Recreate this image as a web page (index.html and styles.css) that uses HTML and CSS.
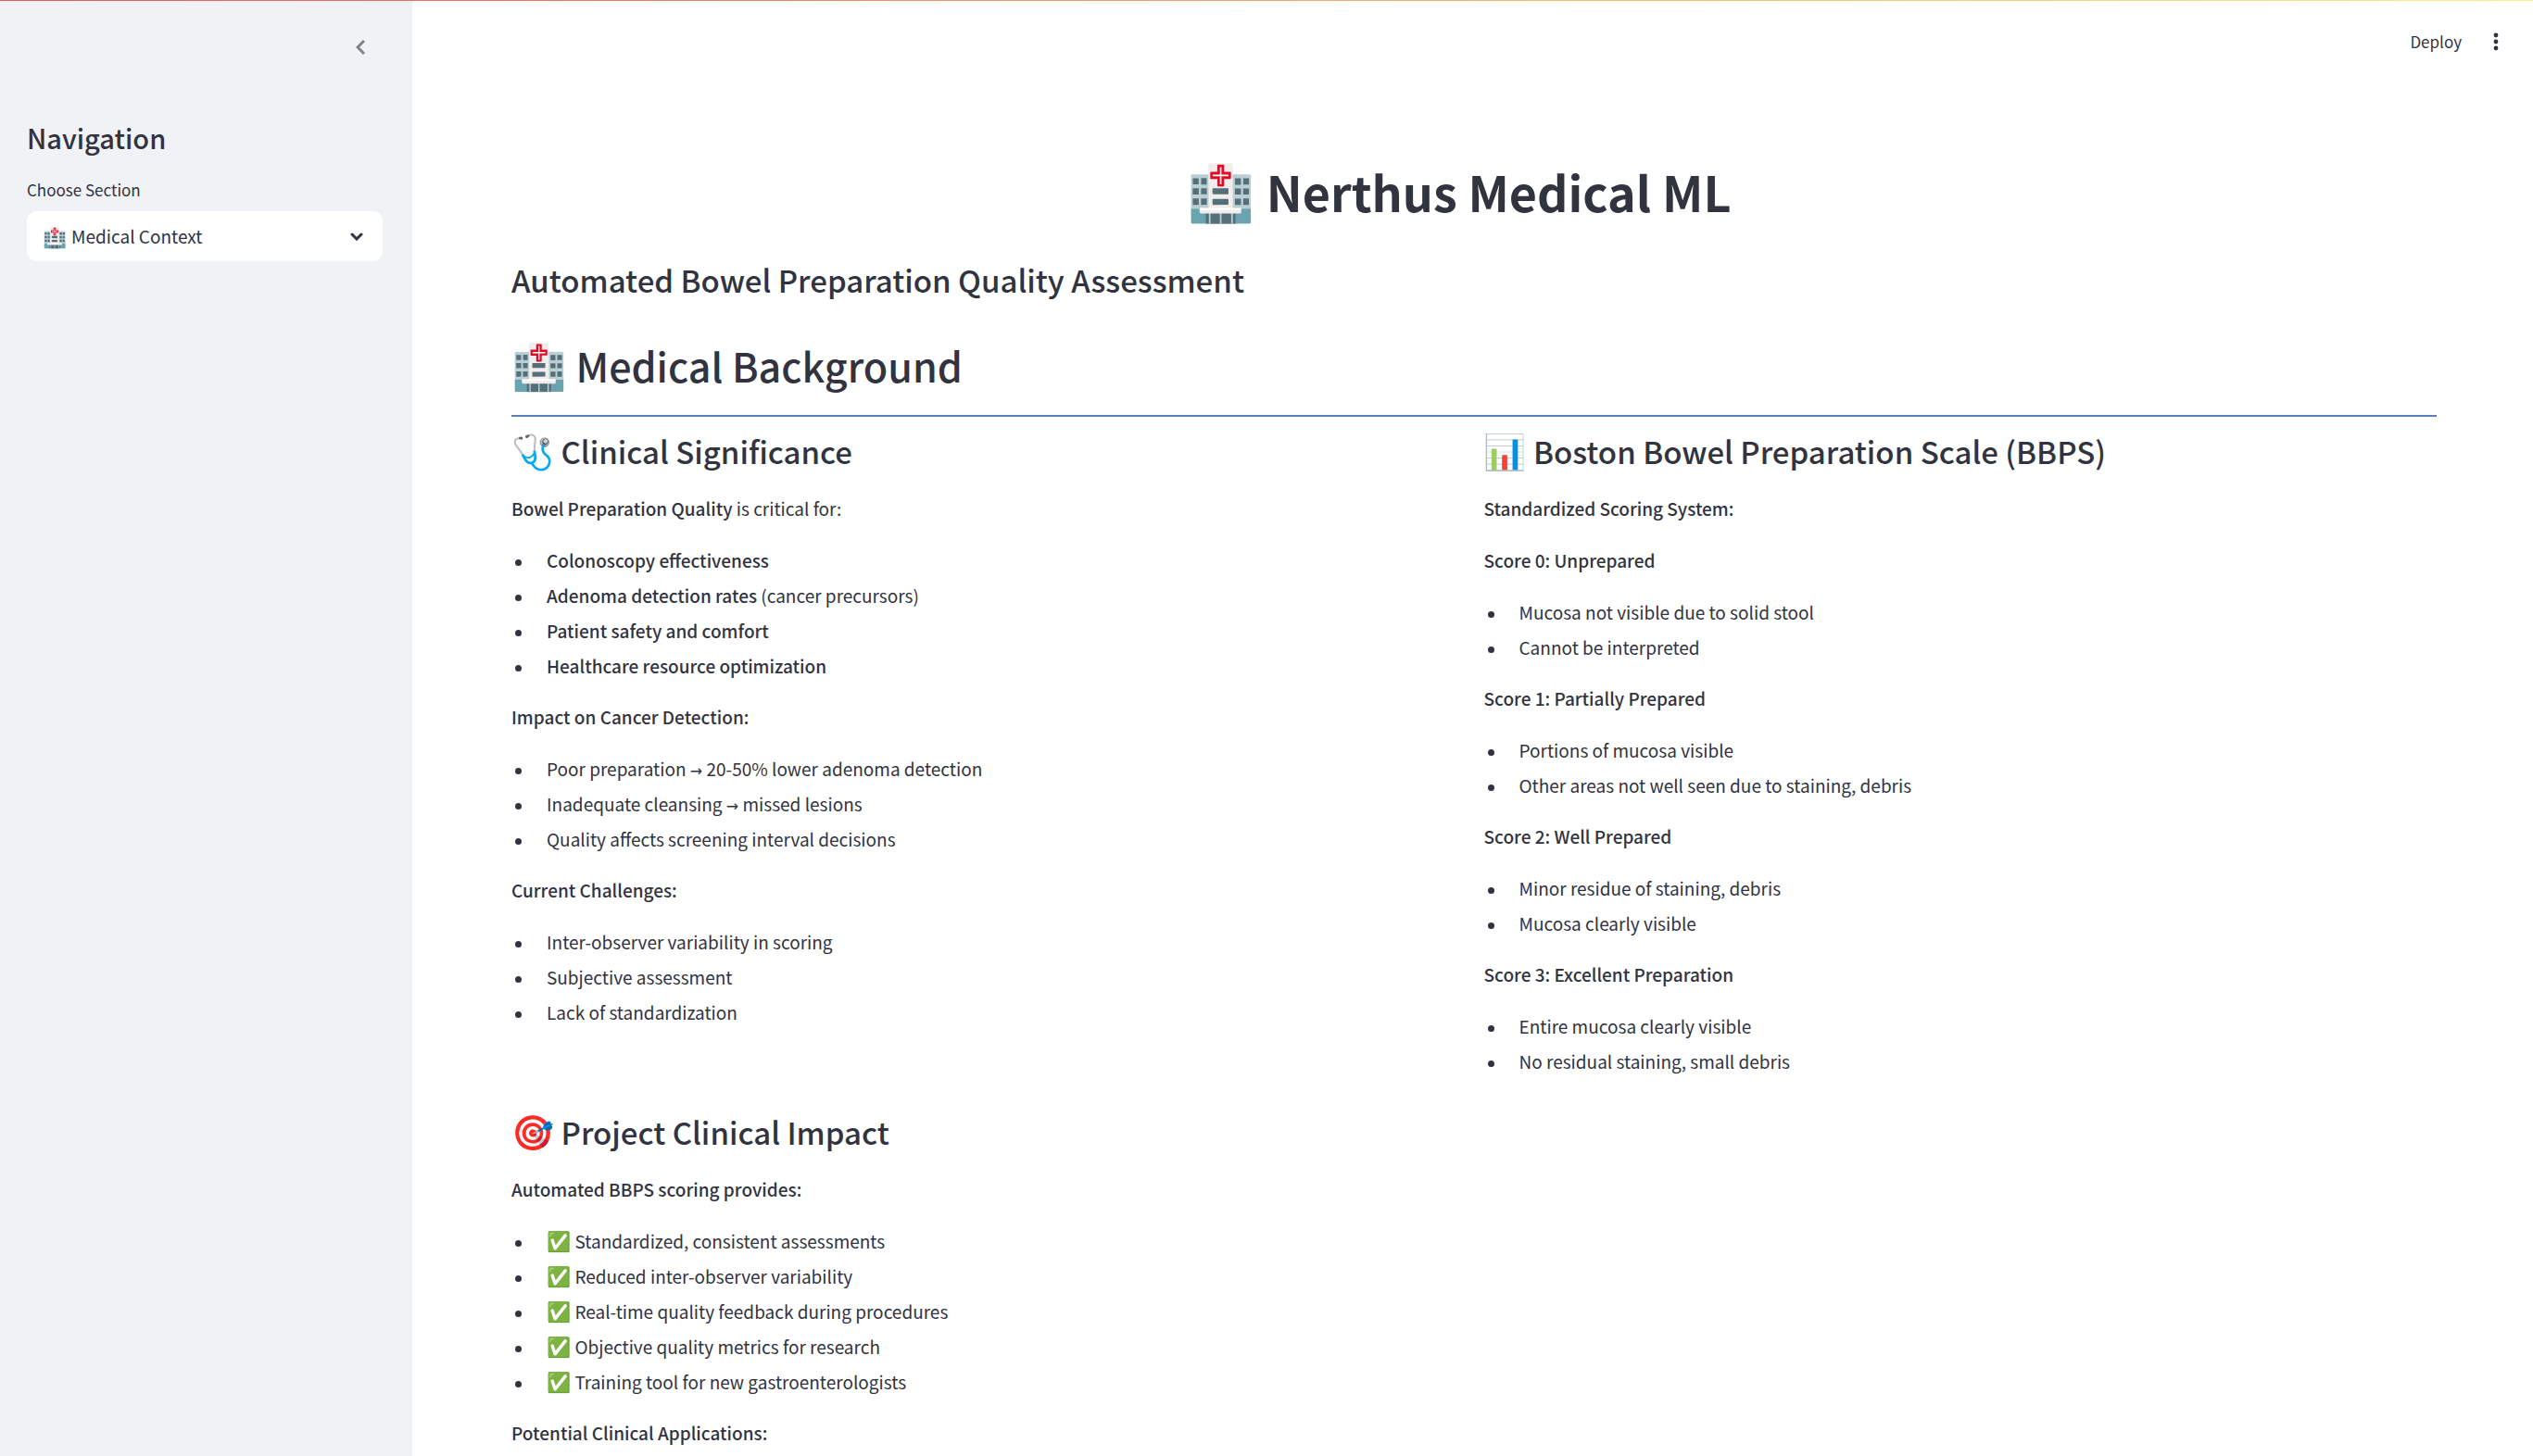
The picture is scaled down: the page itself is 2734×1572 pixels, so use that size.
FILE: index.html
```html
<!DOCTYPE html>
<html lang="en">
<head>
<meta charset="utf-8">
<title>Nerthus Medical ML</title>
<link rel="stylesheet" href="styles.css">
</head>
<body>
<div class="app">
  <aside class="sidebar">
    <div class="sidebar-header">
      <button class="icon-button collapse" type="button" aria-label="Collapse sidebar">
        <svg width="10" height="16" viewBox="0 0 10 16" fill="none" stroke="currentColor" stroke-width="3"><path d="M9 1 2 8l7 7"/></svg>
      </button>
    </div>
    <h2 class="sidebar-title">Navigation</h2>
    <label class="field-label" for="section">Choose Section</label>
    <div class="select-wrap">
      <select class="select" id="section">
        <option>Medical Context</option>
      </select>
      <span class="select-icon emoji">🏥</span>
      <svg class="select-arrow" width="14" height="9" viewBox="0 0 14 9" fill="none" stroke="currentColor" stroke-width="3" stroke-linecap="round"><path d="M2 2l5 5 5-5"/></svg>
    </div>
  </aside>
  <div class="page">
    <header class="toolbar">
      <button class="deploy" type="button">Deploy</button>
      <button class="icon-button" type="button" aria-label="Main menu">
        <svg width="6" height="20" viewBox="0 0 6 20" fill="currentColor"><circle cx="3" cy="3" r="2.4"/><circle cx="3" cy="10" r="2.4"/><circle cx="3" cy="17" r="2.4"/></svg>
      </button>
    </header>
    <main class="content">
      <h1 class="title"><span class="emoji">🏥</span> Nerthus Medical ML</h1>
      <h3 class="subtitle">Automated Bowel Preparation Quality Assessment</h3>
      <h2 class="section-title"><span class="emoji">🏥</span> Medical Background</h2>
      <div class="columns">
        <section class="column">
          <h3><span class="emoji">🩺</span> Clinical Significance</h3>
          <p><strong>Bowel Preparation Quality</strong> is critical for:</p>
          <ul>
            <li><strong>Colonoscopy effectiveness</strong></li>
            <li><strong>Adenoma detection rates</strong> (cancer precursors)</li>
            <li><strong>Patient safety and comfort</strong></li>
            <li><strong>Healthcare resource optimization</strong></li>
          </ul>
          <p><strong>Impact on Cancer Detection:</strong></p>
          <ul>
            <li>Poor preparation <span class="arrow">→</span> 20-50% lower adenoma detection</li>
            <li>Inadequate cleansing <span class="arrow">→</span> missed lesions</li>
            <li>Quality affects screening interval decisions</li>
          </ul>
          <p><strong>Current Challenges:</strong></p>
          <ul>
            <li>Inter-observer variability in scoring</li>
            <li>Subjective assessment</li>
            <li>Lack of standardization</li>
          </ul>
        </section>
        <section class="column">
          <h3><span class="emoji">📊</span> Boston Bowel Preparation Scale (BBPS)</h3>
          <p><strong>Standardized Scoring System:</strong></p>
          <p><strong>Score 0: Unprepared</strong></p>
          <ul>
            <li>Mucosa not visible due to solid stool</li>
            <li>Cannot be interpreted</li>
          </ul>
          <p><strong>Score 1: Partially Prepared</strong></p>
          <ul>
            <li>Portions of mucosa visible</li>
            <li>Other areas not well seen due to staining, debris</li>
          </ul>
          <p><strong>Score 2: Well Prepared</strong></p>
          <ul>
            <li>Minor residue of staining, debris</li>
            <li>Mucosa clearly visible</li>
          </ul>
          <p><strong>Score 3: Excellent Preparation</strong></p>
          <ul>
            <li>Entire mucosa clearly visible</li>
            <li>No residual staining, small debris</li>
          </ul>
        </section>
      </div>
      <section class="impact">
        <h3><span class="emoji">🎯</span> Project Clinical Impact</h3>
        <p><strong>Automated BBPS scoring provides:</strong></p>
        <ul>
          <li><span class="emoji">✅</span> Standardized, consistent assessments</li>
          <li><span class="emoji">✅</span> Reduced inter-observer variability</li>
          <li><span class="emoji">✅</span> Real-time quality feedback during procedures</li>
          <li><span class="emoji">✅</span> Objective quality metrics for research</li>
          <li><span class="emoji">✅</span> Training tool for new gastroenterologists</li>
        </ul>
        <p><strong>Potential Clinical Applications:</strong></p>
      </section>
    </main>
  </div>
</div>
</body>
</html>
```
FILE: styles.css
```css
* { box-sizing: border-box; }

body {
  margin: 0;
  background: #fff;
  color: #31333f;
  font-family: "Noto Sans CJK SC", "Noto Color Emoji", sans-serif;
  font-size: 19px;
  line-height: 34px;
}

h1, h2, h3, p, ul { margin: 0; }
h1, h2, h3, strong { font-weight: 500; }

button, select { font: inherit; color: inherit; }

.emoji {
  font-size: 21px;
  line-height: 1;
}

.app {
  display: flex;
  height: 100vh;
  overflow: hidden;
  border-top: 1px solid;
  border-image: linear-gradient(90deg, #e45c5a, #f8f086) 1;
}

.sidebar {
  flex: none;
  width: 445px;
  padding: 0 32px 0 29px;
  background: #f0f2f6;
}

.sidebar-header {
  display: flex;
  justify-content: flex-end;
  height: 125px;
  padding: 34px 11px 0 0;
}

.icon-button {
  display: flex;
  align-items: center;
  justify-content: center;
  width: 26px;
  height: 32px;
  padding: 0;
  border: 0;
  background: none;
}

.collapse { color: #808288; }

.sidebar-title {
  font-size: 29px;
  line-height: 44px;
}

.field-label {
  display: block;
  margin-top: 22px;
  font-size: 17px;
  line-height: 26px;
}

.select-wrap {
  display: grid;
  align-items: center;
  margin-top: 10px;
}

.select {
  grid-area: 1 / 1;
  width: 100%;
  height: 54px;
  padding: 0 48px;
  border: 0;
  border-radius: 11px;
  background: #fff;
  appearance: none;
}

.select-icon {
  grid-area: 1 / 1;
  margin-left: 17px;
  pointer-events: none;
}

.select-arrow {
  grid-area: 1 / 1;
  justify-self: end;
  margin-right: 21px;
  pointer-events: none;
}

.page {
  flex: 1;
  min-width: 0;
}

.toolbar {
  display: flex;
  align-items: center;
  justify-content: flex-end;
  gap: 24px;
  height: 88px;
  padding-right: 27px;
}

.deploy {
  padding: 0;
  border: 0;
  background: none;
  font-size: 17px;
}

.content { padding: 78px 104px 0 107px; }

.title {
  padding-right: 32px;
  font-size: 52px;
  font-weight: 700;
  line-height: 80px;
  text-align: center;
}

.title .emoji { font-size: 59px; }

h3 {
  font-size: 33px;
  line-height: 46px;
}

h3 .emoji { font-size: 37px; }

.subtitle { margin-top: 32px; }

.section-title {
  margin-top: 32px;
  padding: 9px 0 26px;
  border-bottom: 2px solid #5b7fb4;
  font-size: 43px;
  line-height: 56px;
}

.section-title .emoji { font-size: 48px; }

.columns {
  display: grid;
  grid-template-columns: 1fr 1fr;
  gap: 21px;
  padding-top: 14px;
}

h3 + p { margin-top: 22px; }
p + p { margin-top: 22px; }
ul + p { margin-top: 21px; }

ul {
  display: grid;
  gap: 4px;
  margin-top: 22px;
  padding-left: 38px;
  list-style: none;
}

li::before {
  content: "";
  display: inline-block;
  width: 7px;
  height: 7px;
  margin: 0 27px 0 -34px;
  border-radius: 50%;
  background: currentColor;
  vertical-align: middle;
}

.arrow {
  font-family: "DejaVu Sans", sans-serif;
  font-size: 16px;
  line-height: 1;
}

.impact { margin-top: 36px; }
```
